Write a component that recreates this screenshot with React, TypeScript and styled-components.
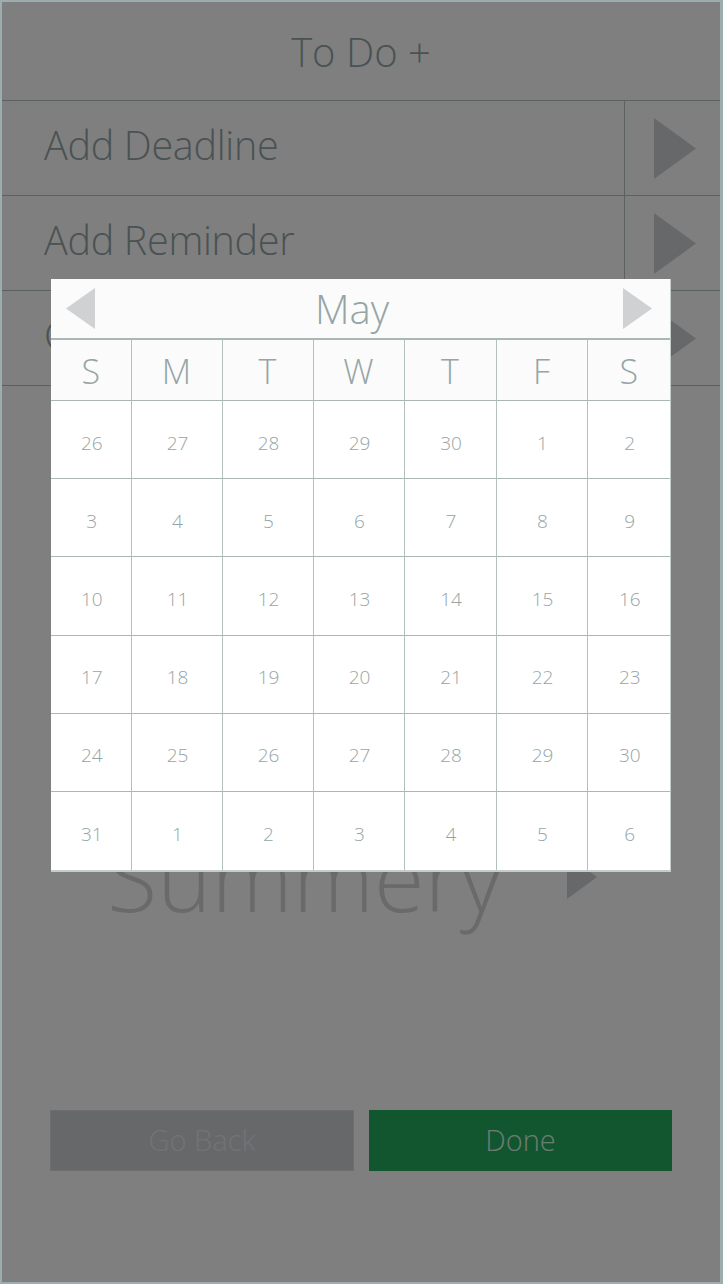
import React from "react";
import styled, { createGlobalStyle } from "styled-components";

const weeks: number[][] = [
  [26, 27, 28, 29, 30, 1, 2],
  [3, 4, 5, 6, 7, 8, 9],
  [10, 11, 12, 13, 14, 15, 16],
  [17, 18, 19, 20, 21, 22, 23],
  [24, 25, 26, 27, 28, 29, 30],
  [31, 1, 2, 3, 4, 5, 6],
];

const dayNames = ["S", "M", "T", "W", "T", "F", "S"];

const Triangle = ({ dir, color, w, h }: { dir: "left" | "right"; color: string; w: number; h: number }) => (
  <svg width={w} height={h} viewBox={`0 0 ${w} ${h}`}>
    {dir === "right" ? (
      <polygon points={`0,0 ${w},${h / 2} 0,${h}`} fill={color} />
    ) : (
      <polygon points={`${w},0 0,${h / 2} ${w},${h}`} fill={color} />
    )}
  </svg>
);

const App = () => (
  <>
    <GlobalStyle />
    <Frame>
      <Header>To Do +</Header>
      <OptionRow>
        <OptionLabel>Add Deadline</OptionLabel>
        <ArrowCell>
          <Triangle dir="right" color="#cfd0d4" w={42} h={61} />
        </ArrowCell>
      </OptionRow>
      <OptionRow>
        <OptionLabel>Add Reminder</OptionLabel>
        <ArrowCell>
          <Triangle dir="right" color="#cfd0d4" w={42} h={61} />
        </ArrowCell>
      </OptionRow>
      <OptionRow>
        <OptionLabel>Choose Category</OptionLabel>
        <ArrowCell>
          <Triangle dir="right" color="#cfd0d4" w={42} h={61} />
        </ArrowCell>
      </OptionRow>

      <SummaryRow>
        <SummaryText>Summery</SummaryText>
        <Triangle dir="right" color="#cfd0d4" w={30} h={44} />
      </SummaryRow>

      <ButtonRow>
        <ActionButton $variant="back">Go Back</ActionButton>
        <ActionButton $variant="done">Done</ActionButton>
      </ButtonRow>

      <Overlay />

      <Calendar>
        <MonthBar>
          <Triangle dir="left" color="#d0d1d3" w={29} h={41} />
          <MonthName>May</MonthName>
          <Triangle dir="right" color="#d0d1d3" w={29} h={41} />
        </MonthBar>
        <Grid>
          {dayNames.map((d, i) => (
            <DayName key={"d" + i} $last={i === 6}>
              {d}
            </DayName>
          ))}
          {weeks.map((week, r) =>
            week.map((n, c) => (
              <DateCell key={r + "-" + c} $last={c === 6} $bottom={r === 5}>
                {n}
              </DateCell>
            ))
          )}
        </Grid>
      </Calendar>
    </Frame>
  </>
);

export default App;

const GlobalStyle = createGlobalStyle`
  html, body {
    margin: 0;
    padding: 0;
    background: #ffffff;
  }
  body {
    font-family: "Open Sans", "Liberation Sans", sans-serif;
    font-weight: 300;
  }
`;

const Frame = styled.div`
  position: relative;
  box-sizing: border-box;
  width: 723px;
  height: 1284px;
  border: 2px solid #9dadad;
  border-right-width: 3px;
  background: #ffffff;
  overflow: hidden;
  display: flex;
  flex-direction: column;
`;

const Header = styled.div`
  height: 98px;
  border-bottom: 1px solid #b4c2c0;
  display: flex;
  align-items: center;
  justify-content: center;
  font-size: 40px;
  color: #95a5a6;
`;

const OptionRow = styled.div`
  display: flex;
  height: 94px;
  border-bottom: 1px solid #b4c2c0;
`;

const OptionLabel = styled.div`
  flex: 1;
  display: flex;
  align-items: center;
  padding: 0 0 6px 42px;
  font-size: 39.5px;
  letter-spacing: -0.3px;
  color: #95a5a6;
  border-right: 1px solid #b4c2c0;
`;

const ArrowCell = styled.div`
  width: 95px;
  display: flex;
  align-items: center;
  justify-content: center;
  padding-left: 4px;
  box-sizing: border-box;
`;

const SummaryRow = styled.div`
  display: flex;
  align-items: center;
  gap: 64px;
  margin-top: 445px;
  padding-left: 105px;
`;

const SummaryText = styled.div`
  font-size: 92px;
  line-height: 1;
  color: #d4d4d4;
`;

const ButtonRow = styled.div`
  display: flex;
  gap: 15px;
  margin-top: 187px;
  padding-left: 48px;
`;

const ActionButton = styled.div<{ $variant: "back" | "done" }>`
  box-sizing: border-box;
  width: ${(p) => (p.$variant === "back" ? "304px" : "303px")};
  height: 61px;
  display: flex;
  align-items: center;
  justify-content: center;
  padding-bottom: 3px;
  font-size: 29px;
  background: ${(p) => (p.$variant === "back" ? "#cfd0d4" : "#24ac5e")};
  border: 1px solid ${(p) => (p.$variant === "back" ? "#dcdde0" : "#24ac5e")};
  color: ${(p) => (p.$variant === "back" ? "#e6e6ea" : "#d8f8e6")};
`;

const Overlay = styled.div`
  position: absolute;
  inset: 0;
  background: rgba(0, 0, 0, 0.5);
`;

const Calendar = styled.div`
  position: absolute;
  left: 49px;
  top: 277px;
  width: 619px;
  background: #ffffff;
  border-right: 1px solid #c5cdcc;
  border-bottom: 2px solid #c5cdcc;
`;

const MonthBar = styled.div`
  height: 61px;
  box-sizing: border-box;
  background: #fbfbfb;
  display: flex;
  align-items: center;
  justify-content: space-between;
  padding: 0 18px 0 15px;
  border-bottom: 2px solid #a9b8b6;
`;

const MonthName = styled.div`
  font-size: 40px;
  color: #95a5a6;
  margin-left: -14px;
`;

const Grid = styled.div`
  display: grid;
  grid-template-columns: 80.5px 91px 91px 91px 92px 91px 1fr;
  grid-template-rows: 61px repeat(6, 78.2px);
`;

const DayName = styled.div<{ $last?: boolean }>`
  box-sizing: border-box;
  background: #fbfbfb;
  display: flex;
  align-items: center;
  justify-content: center;
  padding-top: 2px;
  font-size: 34px;
  color: #95a5a6;
  border-right: ${(p) => (p.$last ? "none" : "1.5px solid #b2c0be")};
  border-bottom: 1.5px solid #a9b8b6;
`;

const DateCell = styled.div<{ $last?: boolean; $bottom?: boolean }>`
  box-sizing: border-box;
  display: flex;
  align-items: center;
  justify-content: center;
  padding: 6px 0 0 2px;
  font-size: 19px;
  color: #95a5a6;
  border-right: ${(p) => (p.$last ? "none" : "1.5px solid #b2c0be")};
  border-bottom: ${(p) => (p.$bottom ? "none" : "1.5px solid #a9b8b6")};
`;
